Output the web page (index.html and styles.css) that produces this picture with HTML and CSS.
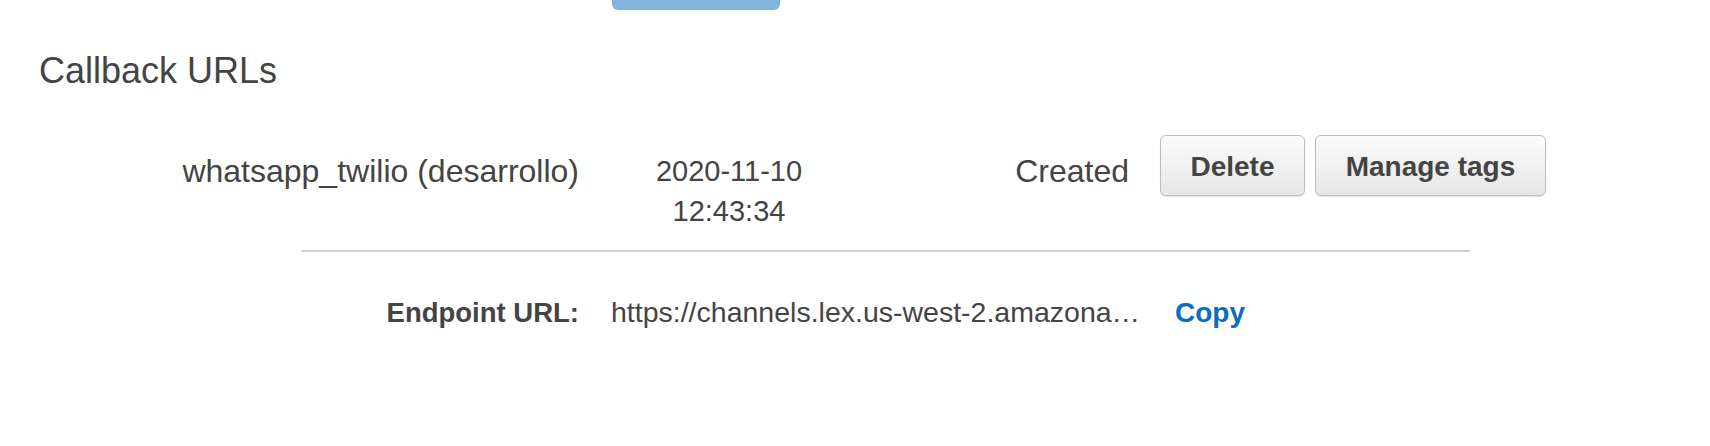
FILE: index.html
```html
<!DOCTYPE html>
<html lang="en">
<head>
<meta charset="utf-8">
<title>Callback URLs</title>
<link rel="stylesheet" href="styles.css">
</head>
<body>
  <div class="top-btn"></div>
  <h2 class="section-title">Callback URLs</h2>
  <div class="callback">
    <div class="row main-row">
      <div class="cell name">whatsapp_twilio (desarrollo)</div>
      <div class="cell date">
        <span class="date-day">2020-11-10</span>
        <span class="date-time">12:43:34</span>
      </div>
      <div class="cell status">Created</div>
      <div class="actions">
        <button class="btn btn-delete">Delete</button>
        <button class="btn btn-tags">Manage tags</button>
      </div>
    </div>
    <div class="divider"></div>
    <div class="row endpoint-row">
      <div class="cell label">Endpoint URL:</div>
      <div class="cell url">https://channels.lex.us-west-2.amazona…</div>
      <a class="copy" href="#">Copy</a>
    </div>
  </div>
</body>
</html>
```

FILE: styles.css
```css
html, body {
  margin: 0;
  padding: 0;
  background: #ffffff;
}

body {
  font-family: "Liberation Sans", Arial, Helvetica, sans-serif;
  color: #444444;
  width: 1710px;
  height: 446px;
  overflow: hidden;
}

.top-btn {
  margin-left: 612px;
  width: 168px;
  height: 10px;
  background: #84b5df;
  border-radius: 0 0 6px 6px;
}

.section-title {
  margin: 40px 0 0 39px;
  font-size: 36px;
  font-weight: normal;
  line-height: 41px;
  color: #444444;
}

.callback {
  margin-top: 44px;
}

.row {
  display: flex;
  align-items: flex-start;
}

.cell {
  line-height: 39px;
}

.main-row .cell {
  padding-top: 17px;
}

.name {
  width: 579px;
  text-align: right;
  font-size: 32px;
  flex-shrink: 0;
}

.date {
  margin-left: 50px;
  width: 200px;
  display: flex;
  flex-direction: column;
  align-items: center;
  font-size: 29px;
  flex-shrink: 0;
}

.date-day {
  line-height: 39px;
}

.date-time {
  line-height: 40px;
}

.status {
  width: 300px;
  text-align: right;
  font-size: 32px;
  flex-shrink: 0;
}

.actions {
  display: flex;
  gap: 10px;
  margin-left: 31px;
}

.btn {
  height: 61px;
  box-sizing: border-box;
  border: 1px solid #bdbdbd;
  border-radius: 6px;
  background: linear-gradient(#fbfbfb, #e7e7e7);
  box-shadow: 0 1px 1px rgba(0, 0, 0, 0.12);
  font-family: "Liberation Sans", Arial, Helvetica, sans-serif;
  font-size: 28px;
  font-weight: bold;
  color: #444444;
  padding: 3px 0 0;
  display: flex;
  align-items: center;
  justify-content: center;
}

.btn-delete {
  width: 145px;
}

.btn-tags {
  width: 231px;
}

.divider {
  margin: 19px 0 0 301px;
  width: 1169px;
  height: 2px;
  background: #cfcfcf;
}

.endpoint-row {
  margin-top: 41px;
}

.label {
  width: 579px;
  text-align: right;
  font-size: 27.5px;
  font-weight: bold;
  flex-shrink: 0;
}

.url {
  margin-left: 32px;
  width: 530px;
  font-size: 28.5px;
  white-space: nowrap;
  flex-shrink: 0;
}

.copy {
  margin-left: 34px;
  font-size: 28px;
  font-weight: bold;
  line-height: 39px;
  color: #0a6ebd;
  text-decoration: none;
}
```
